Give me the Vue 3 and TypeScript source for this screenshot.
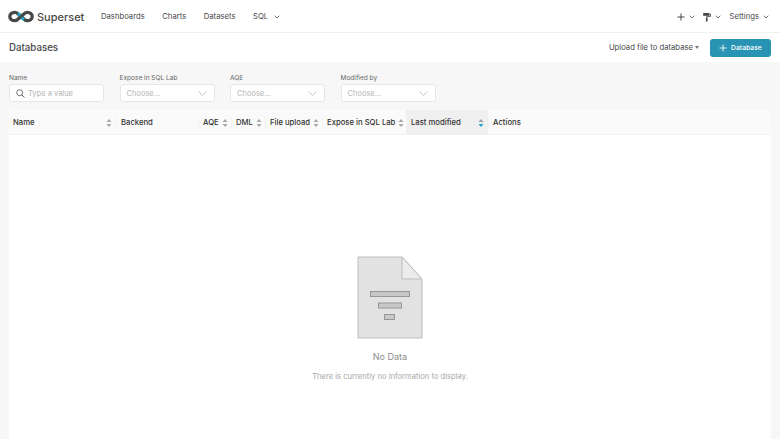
<script setup lang="ts">
interface Col { label: string; width: number; sort: boolean; active?: boolean; spread?: boolean }
const navItems: string[] = ['Dashboards', 'Charts', 'Datasets']
const filters = [
  { label: 'Name', text: 'Type a value', search: true },
  { label: 'Expose in SQL Lab', text: 'Choose...', search: false },
  { label: 'AQE', text: 'Choose...', search: false },
  { label: 'Modified by', text: 'Choose...', search: false },
]
const cols: Col[] = [
  { label: 'Name', width: 107, sort: true, spread: true },
  { label: 'Backend', width: 82, sort: false },
  { label: 'AQE', width: 33, sort: true },
  { label: 'DML', width: 34, sort: true },
  { label: 'File upload', width: 57, sort: true },
  { label: 'Expose in SQL Lab', width: 84, sort: true },
  { label: 'Last modified', width: 82, sort: true, active: true, spread: true },
  { label: 'Actions', width: 100, sort: false },
]
</script>

<template>
  <div class="page">
    <header class="nav">
      <div class="brand">
        <svg class="logo" width="26" height="13" viewBox="0 0 26 13">
          <path d="M7 2.300C3.700 2.300 1.800 4.200 1.800 6.500S3.700 10.700 7 10.700c3 0 4.500-4.200 6-4.200s3 4.200 6 4.200c3.300 0 5.200-1.900 5.200-4.200S22.300 2.300 19 2.300c-3 0-4.500 4.200-6 4.200S10 2.300 7 2.300z" fill="none" stroke="#484848" stroke-width="3.300"/>
          <path d="M10 3.300C11.800 4.500 14.200 8.500 16 9.700" fill="none" stroke="#20a7c9" stroke-width="3"/>
          <path d="M10.800 9C12 8 14 5 15.200 4" fill="none" stroke="#484848" stroke-width="2.600"/>
        </svg>
        <span class="brand-name">Superset</span>
      </div>
      <nav class="menu">
        <a v-for="item in navItems" :key="item">{{ item }}</a>
        <a class="with-caret">SQL
          <svg class="caret" width="6" height="4" viewBox="0 0 6 4"><path d="M.7.7 3 3l2.300-2.300" fill="none" stroke="#666" stroke-width=".9"/></svg>
        </a>
      </nav>
      <div class="right">
        <span class="r-item">
          <svg width="8" height="8" viewBox="0 0 8 8"><path d="M4 .5v7M.5 4h7" stroke="#484848" stroke-width="1"/></svg>
          <svg class="caret" width="6" height="4" viewBox="0 0 6 4"><path d="M.7.7 3 3l2.300-2.300" fill="none" stroke="#666" stroke-width=".9"/></svg>
        </span>
        <span class="r-item">
          <svg width="8" height="10" viewBox="0 0 8 10"><path d="M.2 1h6.300v2.800H.2z" fill="#484848"/><path d="M6.500 2.200h1v2.300H3.700v1.200" fill="none" stroke="#484848" stroke-width=".8"/><path d="M2.900 5.500h1.700v4H2.900z" fill="#484848"/></svg>
          <svg class="caret" width="6" height="4" viewBox="0 0 6 4"><path d="M.7.7 3 3l2.300-2.300" fill="none" stroke="#666" stroke-width=".9"/></svg>
        </span>
        <span class="r-item settings">Settings
          <svg class="caret" width="6" height="4" viewBox="0 0 6 4"><path d="M.7.7 3 3l2.300-2.300" fill="none" stroke="#666" stroke-width=".9"/></svg>
        </span>
      </div>
    </header>

    <section class="titlebar">
      <h1>Databases</h1>
      <div class="actions">
        <span class="upload">Upload file to database
          <svg width="4" height="3" viewBox="0 0 4 3"><path d="M0 0h4L2 3z" fill="#777"/></svg>
        </span>
        <button class="primary" type="button">
          <svg width="8" height="8" viewBox="0 0 8 8"><path d="M4 .5v7M.5 4h7" stroke="#fff" stroke-width=".9"/></svg>
          <span>Database</span>
        </button>
      </div>
    </section>

    <main class="content">
      <div class="filters">
        <div v-for="f in filters" :key="f.label" class="filter">
          <label>{{ f.label }}</label>
          <div class="input" :class="{ search: f.search }">
            <svg v-if="f.search" width="9" height="9" viewBox="0 0 9 9"><circle cx="3.700" cy="3.700" r="3" fill="none" stroke="#666" stroke-width=".9"/><path d="m5.900 5.900 2.600 2.600" stroke="#666" stroke-width="1"/></svg>
            <span class="ph">{{ f.text }}</span>
            <svg v-if="!f.search" class="chev" width="9" height="5" viewBox="0 0 9 5"><path d="M.6.6 4.500 4.400 8.400.6" fill="none" stroke="#b4b4b4" stroke-width=".8"/></svg>
          </div>
        </div>
      </div>

      <div class="table">
        <div class="thead">
          <div
            v-for="c in cols"
            :key="c.label"
            class="th"
            :class="{ active: c.active, spread: c.spread }"
            :style="{ width: c.width + 'px' }"
          >
            <span>{{ c.label }}</span>
            <svg v-if="c.sort" class="sort" width="6" height="8" viewBox="0 0 6 8">
              <path d="M3 0 5.500 3H.5z" :fill="c.active ? '#9aa0a6' : '#a8a8a8'"/>
              <path d="M3 8 .5 5h5z" :fill="c.active ? '#20a7c9' : '#a8a8a8'"/>
            </svg>
          </div>
        </div>
        <div class="empty">
          <svg class="doc" width="66" height="83" viewBox="0 0 66 83">
            <path d="M1 1h44l20 22v59H1z" fill="#e2e2e2" stroke="#bdbdbd" stroke-width="1"/>
            <path d="M45 1v22h20z" fill="#ececec" stroke="#bdbdbd" stroke-width="1"/>
            <rect x="13.500" y="35.500" width="39" height="5" fill="#c8c8c8" stroke="#969696"/>
            <rect x="21.500" y="47" width="23" height="5" fill="#c8c8c8" stroke="#969696"/>
            <rect x="27.500" y="58.500" width="10" height="5" fill="#c8c8c8" stroke="#969696"/>
          </svg>
          <div class="no-data">No Data</div>
          <div class="no-info">There is currently no information to display.</div>
        </div>
      </div>
    </main>
  </div>
</template>

<style>
html, body { margin: 0; background: #fff; }
</style>

<style scoped>
.page { width: 780px; height: 439px; overflow: hidden; display: flex; flex-direction: column; font-family: Inter, "Liberation Sans", sans-serif; color: #484848; background: #f7f7f7; }
.nav { height: 33px; flex: none; background: #fff; display: flex; align-items: center; padding: 1px 11px 0 8px; box-sizing: border-box; border-bottom: 1px solid #f0f0f0; font-size: 7.700px; }
.brand { display: flex; align-items: center; gap: 3px; width: 93px; }
.logo { display: block; }
.brand-name { font-size: 11px; font-weight: 500; color: #484848; }
.menu { display: flex; align-items: center; gap: 17.500px; }
.with-caret { display: flex; align-items: center; gap: 6px; }
.right { margin-left: auto; display: flex; align-items: center; gap: 8px; }
.r-item { display: flex; align-items: center; gap: 4px; }
.settings { gap: 4px; margin-left: 1px; }
.titlebar { height: 29px; flex: none; background: #fff; display: flex; align-items: center; justify-content: space-between; padding: 0 9px; box-sizing: border-box; }
h1 { margin: 0; font-size: 9.700px; font-weight: 500; color: #484848; }
.actions { display: flex; align-items: center; gap: 11px; }
.upload { display: flex; align-items: center; gap: 2px; font-size: 7.700px; }
.primary { width: 61px; height: 18px; border: 0; border-radius: 3px; background: #2893b3; color: #fff; font: 500 6.800px Inter, "Liberation Sans", sans-serif; display: flex; align-items: center; justify-content: center; gap: 4px; padding: 0; }
.content { flex: 1; display: flex; flex-direction: column; padding: 0 9px; min-height: 0; }
.filters { display: flex; gap: 15.500px; padding-top: 12px; height: 48px; flex: none; box-sizing: border-box; }
.filter { width: 95px; display: flex; flex-direction: column; gap: 1px; }
label { font-size: 6.550px; line-height: 9px; color: #666; }
.input { height: 18px; background: #fff; border: 1px solid #e6e6e6; border-radius: 3px; box-sizing: border-box; display: flex; align-items: center; justify-content: space-between; padding: 0 7px 0 6px; font-size: 7.500px; color: #b4b4b4; }
.input.search { justify-content: flex-start; gap: 3px; }
.ph { color: #b4b4b4; }
.table { flex: 1; background: #fff; display: flex; flex-direction: column; min-height: 0; }
.thead { height: 25px; flex: none; display: flex; background: #fafafa; border-bottom: 1px solid #f0f0f0; box-sizing: border-box; }
.th { position: relative; display: flex; align-items: center; gap: 3px; padding: 1px 0 0 5px; box-sizing: border-box; font-size: 7.700px; font-weight: 500; color: #323232; white-space: nowrap; }
.th:first-child { padding-left: 4px; }
.th + .th::before { content: ""; position: absolute; left: 0; top: 7px; height: 11px; width: 1px; background: #f2f2f2; }
.th.spread { justify-content: space-between; padding-right: 4px; }
.th.active { background: #f0f0f0; }
.sort { flex: none; }
.empty { flex: 1; display: flex; flex-direction: column; align-items: center; padding-top: 121px; }
.doc { display: block; }
.no-data { margin-top: 12px; font-size: 9px; line-height: 12px; color: #8c8c8c; }
.no-info { margin-top: 8px; font-size: 7.600px; line-height: 11px; color: #a8a8a8; }
</style>
